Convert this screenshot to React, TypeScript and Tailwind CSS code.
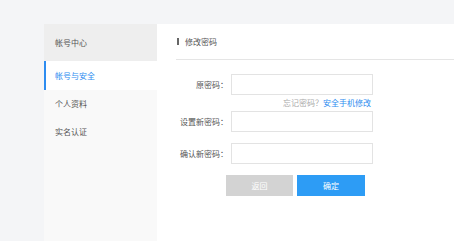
import React from 'react';

const font = { fontFamily: '"Noto Sans CJK SC", "Noto Sans", sans-serif' };

const navItems = ['个人资料', '实名认证'];

const Field: React.FC<{ label: string; className?: string }> = ({ label, className }) => (
  <div className={`flex items-center ${className || ''}`}>
    <label className="w-[55px] text-right text-[8px] text-[#555] pr-[3px]">{label}</label>
    <input
      type="password"
      className="w-[142px] h-[21px] border border-[#e3e3e3] bg-white outline-none"
    />
  </div>
);

export default function App() {
  return (
    <div className="min-h-screen h-[241px] bg-[#f4f5f7] pt-[24px] pl-[44px] flex overflow-hidden" style={font}>
      <aside className="w-[113px] bg-[#f9f9f9] flex flex-col">
        <div className="h-[37px] bg-[#eeeeee] flex items-center pl-[11px] text-[8px] text-[#555]">帐号中心</div>
        <div className="h-[29px] bg-white border-l-2 border-[#2d8cf0] flex items-center pl-[9px] text-[8px] text-[#2d8cf0]">
          帐号与安全
        </div>
        {navItems.map(n => (
          <div key={n} className="h-[28px] flex items-center pl-[11px] text-[8px] text-[#555]">{n}</div>
        ))}
      </aside>

      <main className="flex-1 bg-white pl-[19px]">
        <div className="h-[36px] flex items-center border-b border-[#e5e5e5]">
          <span className="w-[2px] h-[7px] bg-[#666] ml-[1px] mr-[6px]" />
          <span className="text-[8px] text-[#555]">修改密码</span>
        </div>

        <Field label="原密码：" className="mt-[14px]" />
        <div className="w-[195px] text-right text-[8px] mt-[3px] leading-[10px]">
          <span className="text-[#aaa]">忘记密码？</span>
          <span className="text-[#2d8cf0]">安全手机修改</span>
        </div>
        <Field label="设置新密码：" className="mt-[3px]" />
        <Field label="确认新密码：" className="mt-[11px]" />

        <div className="flex gap-[4px] ml-[50px] mt-[11px]">
          <button className="w-[67px] h-[21px] bg-[#d3d3d3] text-white text-[8px]">返回</button>
          <button className="w-[68px] h-[21px] bg-[#2d9cf5] text-white text-[8px]">确定</button>
        </div>
      </main>
    </div>
  );
}
